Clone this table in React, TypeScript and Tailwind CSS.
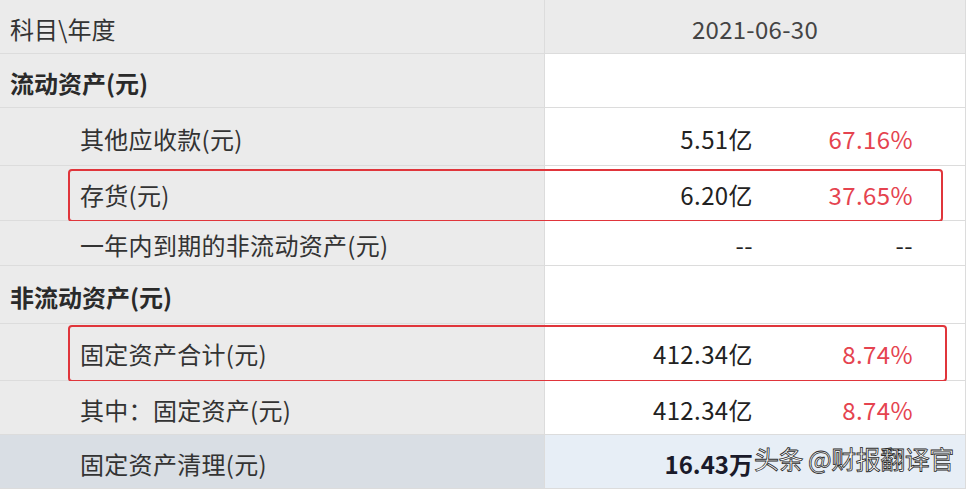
import React from "react";

type Row = {
  label: string;
  value?: string;
  pct?: string;
  bold?: boolean;
  h: string;
  box?: string;
};

const rows: Row[] = [
  { label: "流动资产(元)", bold: true, h: "h-[54px]" },
  { label: "其他应收款(元)", value: "5.51亿", pct: "67.16%", h: "h-[58px]" },
  { label: "存货(元)", value: "6.20亿", pct: "37.65%", h: "h-[55px]", box: "top-[3px] -bottom-[2px] left-[68px] w-[875px]" },
  { label: "一年内到期的非流动资产(元)", value: "--", pct: "--", h: "h-[45px]" },
  { label: "非流动资产(元)", bold: true, h: "h-[58px]" },
  { label: "固定资产合计(元)", value: "412.34亿", pct: "8.74%", h: "h-[57px]", box: "top-[1px] -bottom-[2px] left-[68px] w-[879px]" },
  { label: "其中：固定资产(元)", value: "412.34亿", pct: "8.74%", h: "h-[54px]" },
];

export default function App() {
  return (
    <div className="w-[970px] h-[493px] overflow-hidden bg-white text-[#333] font-['Noto_Sans_CJK_SC',sans-serif] text-[24px] leading-none">
      <div className="w-[966px] border-r border-[#dcdcdc]">
        {/* header */}
        <div className="flex h-[54px] bg-[#ebebeb] border-b border-[#dcdcdc]">
          <div className="w-[545px] border-r border-[#dcdcdc] flex items-center pl-[10px] pt-[4px]">科目\年度</div>
          <div className="flex-1 flex items-center justify-center pt-[4px] text-[#444] tracking-[0.3px]">2021-06-30</div>
        </div>

        {rows.map((r, i) => (
          <div key={i} className={`relative flex border-b border-[#dcdcdc] ${r.h}`}>
            <div className={`w-[545px] bg-[#ebebeb] border-r border-[#dcdcdc] flex items-center pt-[4px] ${r.bold ? "pl-[10px] font-bold text-[#2a2a2a]" : "pl-[80px] tracking-[0.3px]"}`}>
              {r.label}
            </div>
            <div className="flex-1 bg-white flex items-center pt-[4px] tracking-[0.4px]">
              {r.value && (
                <>
                  <div className="w-[208px] text-right text-[#222]">{r.value}</div>
                  <div className={`w-[160px] text-right ${r.pct === "--" ? "text-[#222]" : "text-[#e5434f]"}`}>{r.pct}</div>
                </>
              )}
            </div>
            {r.box && <div className={`absolute ${r.box} border-2 border-[#e0353b] rounded-[4px]`} />}
          </div>
        ))}

        {/* last row */}
        <div className="relative flex h-[54px] border-b border-[#dcdcdc]">
          <div className="w-[545px] bg-[#d9dee4] border-r border-[#dcdcdc] flex items-center pl-[80px] pt-[4px] tracking-[0.3px]">固定资产清理(元)</div>
          <div className="flex-1 bg-[#e7eef6] flex items-center pt-[4px]">
            <div className="w-[208px] text-right font-bold text-[#1a1a2a]">16.43万</div>
          </div>
          <div className="absolute left-[754px] top-[11px] text-[25px] text-white [-webkit-text-stroke:0.8px_#2a2a2a] tracking-[-0.5px]">
            头条 @财报翻译官
          </div>
        </div>
      </div>
    </div>
  );
}
